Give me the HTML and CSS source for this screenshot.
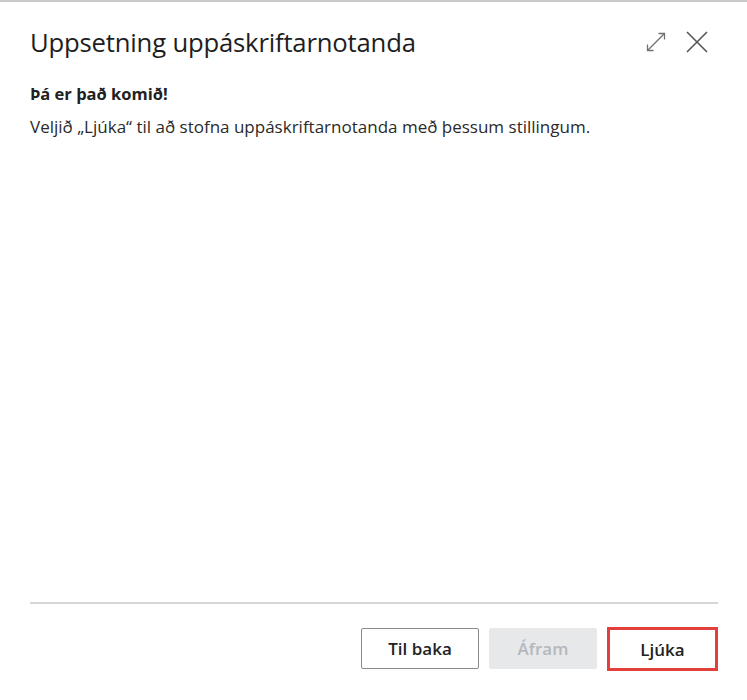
FILE: index.html
```html
<!DOCTYPE html>
<html lang="is">
<head>
<meta charset="utf-8">
<link rel="stylesheet" href="styles.css">
</head>
<body>
<div class="dialog">
  <header class="head">
    <h1 class="title">Uppsetning uppáskriftarnotanda</h1>
    <div class="tools">
      <svg class="ico expand" width="20" height="20" viewBox="0 0 20 20" fill="none" stroke="#707070" stroke-width="1.3">
        <path d="M1.5 18.5 L18.5 1.5"/>
        <path d="M1.5 12.5 V18.5 H7.5"/>
        <path d="M12.5 1.5 H18.5 V7.5"/>
      </svg>
      <svg class="ico close" width="22" height="22" viewBox="0 0 22 22" fill="none" stroke="#555" stroke-width="1.6">
        <path d="M1 1 L21 21 M21 1 L1 21"/>
      </svg>
    </div>
  </header>
  <main class="body">
    <p class="lead">Þá er það komið!</p>
    <p class="text">Veljið „Ljúka“ til að stofna uppáskriftarnotanda með þessum stillingum.</p>
  </main>
  <footer class="foot">
    <button class="btn">Til baka</button>
    <button class="btn disabled">Áfram</button>
    <button class="btn primary">Ljúka</button>
  </footer>
</div>
</body>
</html>
```
FILE: styles.css
```css
html, body {
  margin: 0;
  padding: 0;
  background: #fff;
}
body {
  font-family: "Open Sans", "Noto Sans", sans-serif;
  color: #212121;
  width: 747px;
  height: 700px;
  border-top: 2px solid #c9c9c9;
  box-sizing: border-box;
}
.dialog {
  height: 698px;
  display: flex;
  flex-direction: column;
  padding: 0 29px 0 30px;
}
.head {
  display: flex;
  align-items: center;
  justify-content: space-between;
  height: 80px;
}
.title {
  margin: 0;
  font-size: 25.7px;
  font-weight: 400;
  letter-spacing: -0.2px;
  color: #1e1e1e;
}
.tools {
  display: flex;
  align-items: center;
  gap: 20px;
  margin-right: 10px;
}
.body {
  flex: 1;
  padding-top: 1px;
}
.lead {
  margin: 0 0 11px;
  font-size: 16.5px;
  font-weight: 700;
  line-height: 22px;
}
.text {
  margin: 0;
  font-size: 17px;
  line-height: 22px;
  color: #2a2a2a;
}
.foot {
  border-top: 2px solid #d6d6d6;
  display: flex;
  justify-content: flex-end;
  gap: 10px;
  padding-top: 24px;
  height: 98px;
  box-sizing: border-box;
}
.btn {
  font-family: "Open Sans", "Noto Sans", sans-serif;
  font-size: 17px;
  font-weight: 600;
  height: 41px;
  background: #fff;
  border: 1px solid #8a8a8a;
  border-radius: 2px;
  color: #222;
  width: 118px;
  padding: 0;
}
.btn.disabled {
  width: 108px;
  background: #e7e8ea;
  border-color: #e7e8ea;
  color: #b4b8be;
}
.btn.primary {
  width: 111px;
  border: 3px solid #e3403d;
  border-radius: 0;
  height: 44px;
  margin-top: -1px;
}
```
